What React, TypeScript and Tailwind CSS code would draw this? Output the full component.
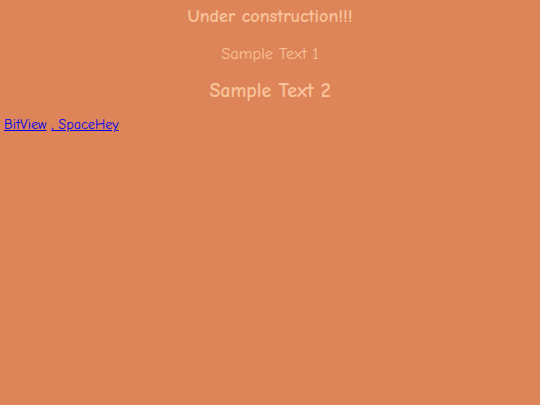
export default function App() {
  return (
    <div
      className="min-h-[405px] w-full bg-[#dd8558] px-1 pt-[6px]"
      style={{ fontFamily: '"Comic Sans MS", "Comic Neue", cursive' }}
    >
      <h3 className="text-center text-[18.2px] font-bold leading-[22px] text-[#f9c29a]">Under construction!!!</h3>
      <p className="mt-[15px] text-center text-[16.5px] leading-[22px] text-[#f9c29a]">Sample Text 1</p>
      <h3 className="mt-[14px] text-center text-[20px] font-bold leading-[24px] text-[#f9c29a]">Sample Text 2</h3>
      <div className="mt-[13px] text-[14.2px] leading-[18px]">
        <a href="#" className="text-[#0000ee] underline">BitView</a>{" "}
        <a href="#" className="text-[#0000ee] underline">, SpaceHey</a>
      </div>
    </div>
  );
}
